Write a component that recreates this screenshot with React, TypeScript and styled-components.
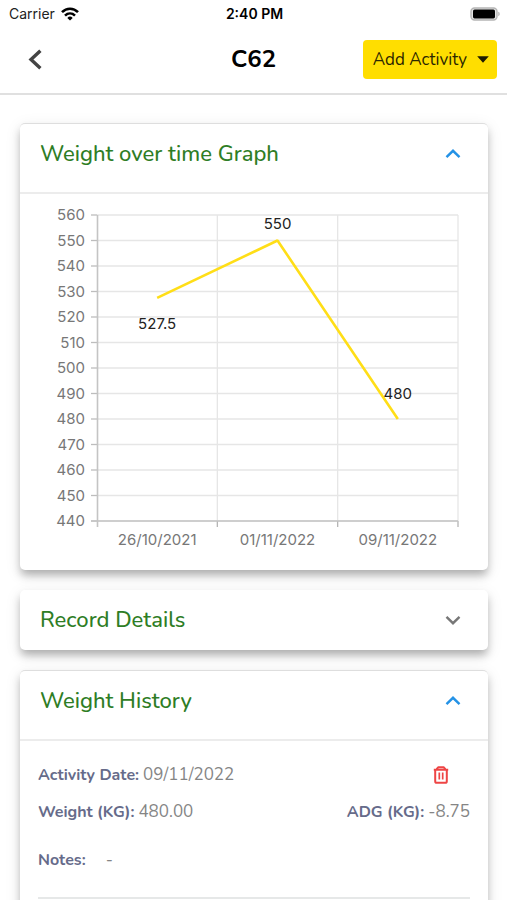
import React, { useState } from "react";
import styled, { createGlobalStyle } from "styled-components";

const GlobalStyle = createGlobalStyle`
  *, *::before, *::after { box-sizing: border-box; }
  body {
    margin: 0;
    background: #fff;
    font-family: Nunito, Lato, "Open Sans", sans-serif;
  }
  button { font: inherit; border: 0; background: none; padding: 0; cursor: pointer; }
  h1, h2, dl, dd, dt { margin: 0; }
`;

const Screen = styled.div`
  display: flex;
  flex-direction: column;
  height: 100vh;
`;

const StatusBar = styled.div`
  display: grid;
  grid-template-columns: 1fr auto 1fr;
  align-items: center;
  height: 27px;
  padding: 0 7px 0 9px;
  font-family: Inter, sans-serif;
  font-size: 14px;
  color: #222;
`;

const Carrier = styled.div`
  display: flex;
  align-items: center;
  gap: 6px;
`;

const Clock = styled.div`
  font-size: 14px;
  font-weight: 600;
  color: #000;
`;

const BatterySlot = styled.div`
  display: flex;
  justify-content: flex-end;
`;

const TopBar = styled.header`
  display: grid;
  grid-template-columns: 1fr auto 1fr;
  align-items: center;
  height: 68px;
  padding: 0 10px 2px;
  border-bottom: 2px solid #e0e0e0;
`;

const BackButton = styled.button`
  display: flex;
  justify-self: start;
  margin-left: 14px;
`;

const PageTitle = styled.h1`
  font-size: 24px;
  line-height: 30px;
  font-weight: 700;
  color: #000;
`;

const AddButton = styled.button`
  display: flex;
  align-items: center;
  justify-self: end;
  gap: 10px;
  height: 39px;
  padding: 0 8px 0 10px;
  border-radius: 4px;
  background: #ffde00;
  color: #2b2600;
  font-size: 17px;
  white-space: nowrap;
`;

const Content = styled.main`
  flex: 1;
  min-height: 0;
  display: flex;
  flex-direction: column;
  gap: 20px;
  padding: 28px 19px 20px 20px;
  overflow-y: auto;
  scrollbar-width: none;
`;

const Card = styled.section<{ $open: boolean }>`
  flex: none;
  border-radius: 5px;
  border-top: ${(p) => (p.$open ? "1px solid #dedede" : "0")};
  background: #fff;
  box-shadow:
    0 6px 8px -1px rgba(0, 0, 0, 0.28),
    0 4px 16px 1px rgba(0, 0, 0, 0.08);
`;

const CardHeading = styled.h2<{ $open: boolean }>`
  padding-bottom: ${(p) => (p.$open ? "8px" : "0")};
  border-bottom: ${(p) => (p.$open ? "2px solid #ececec" : "0")};
  font-size: 22px;
  font-weight: 500;
`;

const CardToggle = styled.button`
  display: flex;
  align-items: center;
  justify-content: space-between;
  width: 100%;
  height: 60px;
  padding: 0 27px 0 20px;
  color: #2e7d25;
  text-align: left;
`;

const Chart = styled.svg`
  display: block;
  width: 100%;
  height: auto;
  font-family: Inter, sans-serif;
  font-size: 15px;
`;

const EntryList = styled.div`
  padding: 0 18px 32px;
`;

const Entry = styled.div`
  padding: 22px 0 25px;
  border-bottom: 2px solid #e6e8e8;
`;

const EntryRow = styled.div<{ $gap?: number }>`
  display: flex;
  align-items: center;
  justify-content: space-between;
  height: 24px;
  margin-bottom: ${(p) => p.$gap ?? 0}px;
`;

const Field = styled.dl<{ $gap?: number }>`
  display: flex;
  align-items: baseline;
  gap: ${(p) => p.$gap ?? 4}px;
  line-height: 24px;
`;

const Label = styled.dt`
  font-size: 16px;
  font-weight: 700;
  color: #666b8a;
`;

const Value = styled.dd`
  font-size: 17px;
  color: #858585;
`;

const DeleteButton = styled.button`
  display: flex;
  margin-right: 21px;
`;

const WifiIcon = () => (
  <svg width="18" height="14" viewBox="0 0 18 14" fill="none" stroke="#000" strokeWidth="2.6" aria-hidden="true">
    <path d="M1 5.2C5.6.6 12.4.6 17 5.2" />
    <path d="M4 8.6c2.9-2.8 7.1-2.8 10 0" />
    <path d="M9 13.6 6.3 10.9a3.9 3.9 0 0 1 5.4 0z" fill="#000" stroke="none" />
  </svg>
);

const BatteryIcon = () => (
  <svg width="30" height="14" viewBox="0 0 30 14" aria-label="Battery full">
    <rect x="1" y="1" width="26" height="12" rx="3.5" fill="#e4e4e4" stroke="#b5b5b5" strokeWidth="1.4" />
    <rect x="3" y="2.6" width="22" height="8.8" rx="1.6" fill="#000" />
    <path d="M28.4 4.8c1.6.6 1.6 3.8 0 4.4z" fill="#a5a5a5" />
  </svg>
);

const BackIcon = () => (
  <svg width="22" height="22" viewBox="0 0 22 22" fill="none" stroke="#444" strokeWidth="3.4" aria-hidden="true">
    <path d="M16.4 2.8 7 11.6l9.4 8.6" />
  </svg>
);

const CaretIcon = () => (
  <svg width="12" height="7" viewBox="0 0 12 7" aria-hidden="true">
    <path d="M.2.3h11.6L6 6.8z" fill="#1d1a00" />
  </svg>
);

const ChevronIcon = ({ up }: { up: boolean }) => (
  <svg width="16" height="12" viewBox="0 0 16 12" fill="none" stroke={up ? "#2492e6" : "#777"} strokeWidth="2.4" aria-hidden="true">
    <path d={up ? "M1.5 9.2 8 2.8l6.5 6.4" : "M1.5 2.8 8 9.2l6.5-6.4"} />
  </svg>
);

const TrashIcon = () => (
  <svg width="16" height="20" viewBox="0 0 16 20" fill="none" stroke="#ee4545" strokeWidth="2" strokeLinejoin="round" aria-hidden="true">
    <path d="M.8 4.8h14.4M3.6 4.2l1.8-2h5.2l1.8 2" />
    <path d="M2.2 5v11.2a1.6 1.6 0 0 0 1.6 1.6h8.4a1.6 1.6 0 0 0 1.6-1.6V5" />
    <path d="M6.3 7.6v7M9.7 7.6v7" strokeWidth="1.7" />
  </svg>
);

const plot = { left: 77, right: 438, top: 21, bottom: 327, min: 440, max: 560 };
const points = [
  { date: "26/10/2021", value: 527.5, labelShift: 31 },
  { date: "01/11/2022", value: 550, labelShift: -12 },
  { date: "09/11/2022", value: 480, labelShift: -20 },
];
const step = (plot.right - plot.left) / points.length;
const yOf = (v: number) =>
  plot.bottom - ((v - plot.min) / (plot.max - plot.min)) * (plot.bottom - plot.top);
const xOf = (i: number) => plot.left + step * (i + 0.5);
const ticks = Array.from({ length: 13 }, (_, i) => plot.max - i * 10);

const WeightChart = () => (
  <Chart viewBox="0 0 468 376" role="img" aria-label="Weight over time">
    {ticks.map((t) => (
      <g key={t}>
        <line x1={plot.left} x2={plot.right} y1={yOf(t)} y2={yOf(t)} stroke="#e6e6e6" strokeWidth="1.3" />
        <line x1={plot.left - 6} x2={plot.left} y1={yOf(t)} y2={yOf(t)} stroke="#bdbdbd" strokeWidth="1.3" />
        <text x="65" y={yOf(t) + 5} textAnchor="end" fill="#777">{t}</text>
      </g>
    ))}
    {[1, 2, 3].map((i) => (
      <g key={i}>
        <line x1={plot.left + step * i} x2={plot.left + step * i} y1={plot.top} y2={plot.bottom} stroke="#e6e6e6" strokeWidth="1.3" />
        <line x1={plot.left + step * i} x2={plot.left + step * i} y1={plot.bottom} y2={plot.bottom + 6} stroke="#b5b5b5" strokeWidth="1.3" />
      </g>
    ))}
    <path
      d={`M${plot.left + 0.5} ${plot.top}V${plot.bottom + 6}M${plot.left - 6} ${plot.bottom}H${plot.right}`}
      stroke="#c4c4c4"
      strokeWidth="1.6"
      fill="none"
    />
    <polyline
      points={points.map((p, i) => `${xOf(i)},${yOf(p.value)}`).join(" ")}
      fill="none"
      stroke="#ffde17"
      strokeWidth="2.6"
      strokeLinejoin="bevel"
    />
    {points.map((p, i) => (
      <g key={p.date} textAnchor="middle">
        <text x={xOf(i)} y={yOf(p.value) + p.labelShift} fill="#222">{p.value}</text>
        <text x={xOf(i)} y="351" fill="#777">{p.date}</text>
      </g>
    ))}
  </Chart>
);

type PanelProps = { title: string; initiallyOpen?: boolean; children?: React.ReactNode };

const Panel = ({ title, initiallyOpen = false, children }: PanelProps) => {
  const [open, setOpen] = useState(initiallyOpen);
  return (
    <Card $open={open}>
      <CardHeading $open={open}>
        <CardToggle type="button" aria-expanded={open} onClick={() => setOpen(!open)}>
          {title}
          <ChevronIcon up={open} />
        </CardToggle>
      </CardHeading>
      {open && children}
    </Card>
  );
};

export default function App() {
  return (
    <Screen>
      <GlobalStyle />
      <StatusBar>
        <Carrier>
          Carrier
          <WifiIcon />
        </Carrier>
        <Clock>2:40 PM</Clock>
        <BatterySlot>
          <BatteryIcon />
        </BatterySlot>
      </StatusBar>
      <TopBar>
        <BackButton type="button" aria-label="Back">
          <BackIcon />
        </BackButton>
        <PageTitle>C62</PageTitle>
        <AddButton type="button" aria-haspopup="menu">
          Add Activity
          <CaretIcon />
        </AddButton>
      </TopBar>
      <Content>
        <Panel title="Weight over time Graph" initiallyOpen>
          <WeightChart />
        </Panel>
        <Panel title="Record Details" />
        <Panel title="Weight History" initiallyOpen>
          <EntryList>
            <Entry>
              <EntryRow $gap={13}>
                <Field>
                  <Label>Activity Date:</Label>
                  <Value>09/11/2022</Value>
                </Field>
                <DeleteButton type="button" aria-label="Delete activity">
                  <TrashIcon />
                </DeleteButton>
              </EntryRow>
              <EntryRow $gap={24}>
                <Field>
                  <Label>Weight (KG):</Label>
                  <Value>480.00</Value>
                </Field>
                <Field>
                  <Label>ADG (KG):</Label>
                  <Value>-8.75</Value>
                </Field>
              </EntryRow>
              <EntryRow>
                <Field $gap={20}>
                  <Label>Notes:</Label>
                  <Value>-</Value>
                </Field>
              </EntryRow>
            </Entry>
          </EntryList>
        </Panel>
      </Content>
    </Screen>
  );
}
